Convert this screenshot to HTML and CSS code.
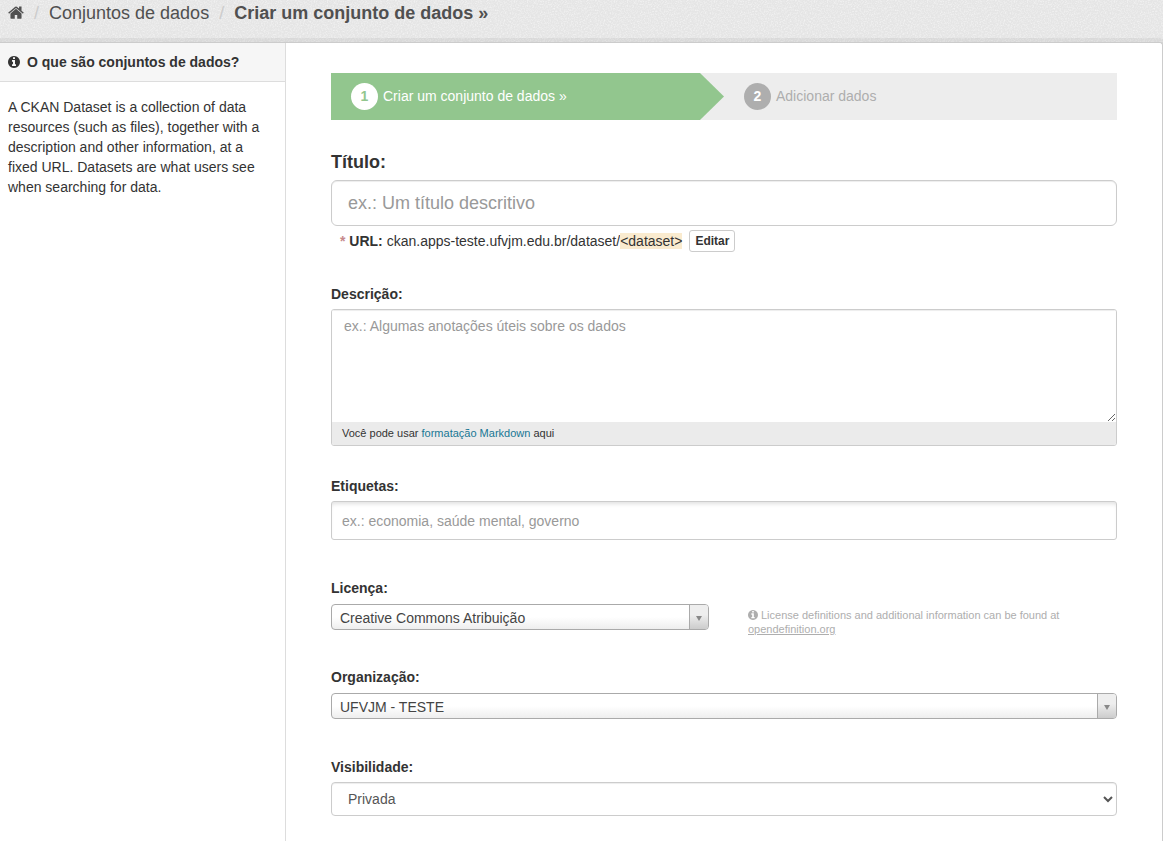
FILE: index.html
```html
<!DOCTYPE html>
<html lang="pt-BR">
<head>
<meta charset="utf-8">
<meta name="viewport" content="width=device-width, initial-scale=1">
<title>Criar um conjunto de dados</title>
<link rel="stylesheet" href="styles.css">
</head>
<body>
<svg class="symbols" aria-hidden="true">
  <symbol id="icon-home" viewBox="0 240 1664 1300"><path d="M1408 992v480q0 26-19 45t-45 19h-384v-384h-256v384h-384q-26 0-45-19t-19-45v-480q0-1 .5-3t.5-3l575-474 575 474q1 2 1 6zm223-69l-62 74q-8 9-21 11h-3q-13 0-21-7l-692-577-692 577q-12 8-24 7-13-2-21-11l-62-74q-8-10-7-23.5t11-21.5l719-599q32-26 76-26t76 26l244 204v-195q0-14 9-23t23-9h192q14 0 23 9t9 23v408l219 182q10 8 11 21.5t-7 23.5z"/></symbol>
  <symbol id="icon-info" viewBox="0 128 1536 1536"><path d="M1024 1376v-160q0-14-9-23t-23-9h-96v-512q0-14-9-23t-23-9h-320q-14 0-23 9t-9 23v160q0 14 9 23t23 9h96v320h-96q-14 0-23 9t-9 23v160q0 14 9 23t23 9h448q14 0 23-9t9-23zm-128-896v-160q0-14-9-23t-23-9h-192q-14 0-23 9t-9 23v160q0 14 9 23t23 9h192q14 0 23-9t9-23zm640 416q0 209-103 385.5t-279.5 279.5-385.5 103-385.5-103-279.5-279.5-103-385.5 103-385.5 279.5-279.5 385.5-103 385.5 103 279.5 279.5 103 385.5z"/></symbol>
</svg>
<nav class="toolbar" aria-label="Navegação">
  <ol class="breadcrumb">
    <li><a href="#" aria-label="Início"><svg class="icon-home"><use href="#icon-home"/></svg></a></li>
    <li><a href="#">Conjuntos de dados</a></li>
    <li class="active"><a href="#">Criar um conjunto de dados »</a></li>
  </ol>
</nav>
<div class="wrapper">
  <aside class="sidebar">
    <h2 class="sidebar-heading"><svg class="icon-info"><use href="#icon-info"/></svg>O que são conjuntos de dados?</h2>
    <p class="sidebar-text">A CKAN Dataset is a collection of data resources (such as files), together with a description and other information, at a fixed URL. Datasets are what users see when searching for data.</p>
  </aside>
  <main class="primary">
    <ol class="stages">
      <li class="stage stage-active"><span class="stage-number">1</span><span class="stage-name">Criar um conjunto de dados »</span></li>
      <li class="stage"><span class="stage-number">2</span><span class="stage-name">Adicionar dados</span></li>
    </ol>
    <form class="form">
      <div class="group group-title">
        <label class="label label-large" for="title">Título:</label>
        <input class="input input-large" id="title" type="text" placeholder="ex.: Um título descritivo">
        <div class="url-preview">
          <p><span class="required">*</span> <strong>URL:</strong> ckan.apps-teste.ufvjm.edu.br/dataset/<span class="slug">&lt;dataset&gt;</span></p>
          <button class="edit-button" type="button">Editar</button>
        </div>
      </div>
      <div class="group">
        <label class="label" for="notes">Descrição:</label>
        <div class="editor">
          <textarea class="editor-text" id="notes" placeholder="ex.: Algumas anotações úteis sobre os dados"></textarea>
          <p class="editor-info">Você pode usar <a href="#">formatação Markdown</a> aqui</p>
        </div>
      </div>
      <div class="group group-tags">
        <label class="label" for="tags">Etiquetas:</label>
        <input class="input input-tags" id="tags" type="text" placeholder="ex.: economia, saúde mental, governo">
      </div>
      <div class="group group-choice">
        <label class="label label-choice" for="license">Licença:</label>
        <div class="license-row">
          <div class="choice"><select class="choice-select" id="license"><option>Creative Commons Atribuição</option></select></div>
          <p class="help"><svg class="icon-help"><use href="#icon-info"/></svg>License definitions and additional information can be found at <a href="#">opendefinition.org</a></p>
        </div>
      </div>
      <div class="group group-tags">
        <label class="label label-choice" for="organization">Organização:</label>
        <div class="choice"><select class="choice-select" id="organization"><option>UFVJM - TESTE</option></select></div>
      </div>
      <div class="group">
        <label class="label" for="visibility">Visibilidade:</label>
        <select class="input input-select" id="visibility"><option>Privada</option></select>
      </div>
    </form>
  </main>
</div>
</body>
</html>
```
FILE: styles.css
```css
* {
  box-sizing: border-box;
}

body {
  display: flex;
  flex-direction: column;
  min-height: 100vh;
  margin: 0;
  background-color: #e5e5e5;
  background-image: url("data:image/svg+xml,%3Csvg xmlns='http://www.w3.org/2000/svg' width='100' height='100'%3E%3Cfilter id='n'%3E%3CfeTurbulence type='fractalNoise' baseFrequency='.7' numOctaves='2' stitchTiles='stitch'/%3E%3CfeColorMatrix values='0 0 0 0 1 0 0 0 0 1 0 0 0 0 1 1.2 0 0 0 -.5'/%3E%3C/filter%3E%3Crect width='100' height='100' filter='url(%23n)'/%3E%3C/svg%3E");
  color: #333;
  font: 14px/20px "Liberation Sans", Arial, sans-serif;
}

h2, p, ol {
  margin: 0;
  padding: 0;
}

ol {
  list-style: none;
}

svg {
  fill: currentColor;
}

.symbols {
  display: none;
}

.toolbar {
  padding: 0 8px 12px;
}

.breadcrumb {
  display: flex;
  font-size: 18px;
  line-height: 26px;
}

.breadcrumb li + li::before {
  content: "/";
  padding: 0 10px;
  color: #ccc;
}

.breadcrumb a {
  color: #505050;
  text-decoration: none;
}

.active {
  font-weight: bold;
}

.active::before {
  font-weight: normal;
}

.icon-home {
  width: 16px;
  height: 13px;
}

.wrapper {
  display: flex;
  flex: 1;
  border-top: 1px solid #ccc;
  border-right: 1px solid #ccc;
  border-top-right-radius: 3px;
  background: #fff;
  box-shadow: 0 0 0 4px rgba(0, 0, 0, 0.05);
  margin-top: 4px;
}

.sidebar {
  flex: 0 0 286px;
  border-right: 1px solid #ddd;
}

.sidebar-heading {
  display: flex;
  align-items: center;
  gap: 7px;
  padding: 9px 8px;
  border-bottom: 1px solid #ddd;
  background: #f6f6f6;
  font-size: 14px;
  line-height: 20px;
}

.icon-info {
  width: 12px;
  height: 12px;
}

.sidebar-text {
  padding: 15px 20px 15px 8px;
}

.primary {
  flex: 1;
  min-width: 0;
  padding: 30px 45px 25px;
}

.stages {
  display: grid;
  grid-template-columns: 1fr 1fr;
  margin-bottom: 29px;
  background: #ededed;
}

.stage {
  display: flex;
  gap: 5px;
  padding: 10px 20px;
  color: #aeaeae;
}

.stage-active {
  background: #92c68e;
  color: #fff;
  clip-path: polygon(0 0, calc(100% - 24px) 0, 100% 50%, calc(100% - 24px) 100%, 0 100%);
}

.stage-number {
  width: 27px;
  border-radius: 50%;
  background: #aeaeae;
  color: #fff;
  font-weight: bold;
  line-height: 27px;
  text-align: center;
}

.stage-name {
  line-height: 26px;
}

.stage-active .stage-number {
  background: #fff;
  color: #92c68e;
}

.group {
  margin-bottom: 30px;
}

.group-title {
  margin-bottom: 32px;
}

.group-tags {
  margin-bottom: 38px;
}

.group-choice {
  margin-bottom: 37px;
}

.label {
  display: block;
  margin-bottom: 5px;
  font-weight: bold;
}

.label-large {
  font-size: 18px;
  line-height: 26px;
}

.label-choice {
  margin-bottom: 6px;
}

.input {
  display: block;
  width: 100%;
  border: 1px solid #ccc;
  border-radius: 4px;
  background: #fff;
  box-shadow: inset 0 1px 1px rgba(0, 0, 0, 0.075);
  color: #555;
  font: inherit;
}

::placeholder {
  color: #999;
  opacity: 1;
}

.input-large {
  height: 46px;
  padding: 10px 16px;
  border-radius: 6px;
  font-size: 18px;
}

.input-tags {
  height: 39px;
  padding: 5px 10px;
  border-radius: 3px;
  box-shadow: inset 0 4px 4px -2px rgba(0, 0, 0, 0.12);
}

.input-select {
  height: 34px;
  padding: 6px 12px;
}

.url-preview {
  display: flex;
  align-items: center;
  gap: 7px;
  margin-top: 4px;
  padding-left: 9px;
}

.required {
  color: #c6898b;
  font-weight: bold;
}

.slug {
  background: #faebcf;
}

.edit-button {
  height: 22px;
  padding: 0 5px;
  border: 1px solid #ccc;
  border-radius: 3px;
  background: #fff;
  color: #333;
  font: bold 12px/20px "Liberation Sans", Arial, sans-serif;
}

.editor {
  border: 1px solid #ccc;
  border-radius: 3px;
  overflow: hidden;
}

.editor-text {
  display: block;
  width: 100%;
  height: 112px;
  padding: 6px 12px;
  border: 0;
  box-shadow: inset 0 1px 1px rgba(0, 0, 0, 0.075);
  color: #555;
  font: inherit;
  resize: vertical;
}

.editor-info {
  padding: 1px 10px 2px;
  background: #ebebeb;
  font-size: 11px;
}

.editor-info a {
  color: #187794;
  text-decoration: none;
}

.license-row {
  display: grid;
  grid-template-columns: minmax(0, 378px) 1fr;
  gap: 39px;
  height: 26px;
}

.choice {
  position: relative;
  height: 26px;
}

.choice-select {
  width: 100%;
  height: 26px;
  padding: 1px 26px 0 8px;
  border: 1px solid #aaa;
  border-radius: 4px;
  background: linear-gradient(to top, #eee 0%, #fff 50%);
  color: #444;
  font: inherit;
  appearance: none;
}

.choice::before {
  content: "";
  position: absolute;
  top: 1px;
  right: 1px;
  bottom: 1px;
  width: 18px;
  border-left: 1px solid #aaa;
  border-radius: 0 3px 3px 0;
  background: linear-gradient(to top, #ccc 0%, #eee 60%);
  pointer-events: none;
}

.choice::after {
  content: "";
  position: absolute;
  top: 12px;
  right: 7px;
  border: solid transparent;
  border-width: 5px 3px 0;
  border-top-color: #888;
  pointer-events: none;
}

.help {
  padding-top: 4px;
  color: #aeaeae;
  font-size: 11px;
  line-height: 14px;
}

.help a {
  color: inherit;
}

.icon-help {
  width: 10px;
  height: 10px;
  margin-right: 3px;
  vertical-align: -1px;
}
```
